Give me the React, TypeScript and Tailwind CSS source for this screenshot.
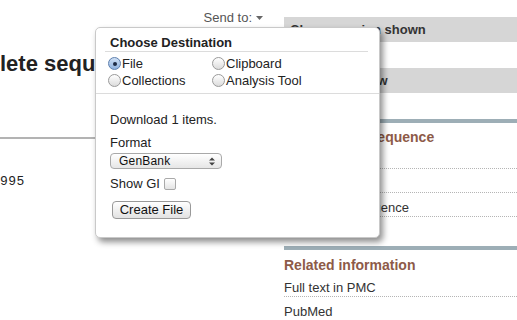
import React from 'react'

const analyzeItems = ['Run BLAST', 'Pick Primers', 'Find in this Sequence']
const relatedItems = ['Full text in PMC', 'PubMed']

function Radio({ checked }: { checked?: boolean }) {
  return (
    <span
      className={
        checked
          ? 'w-[13px] h-[13px] rounded-full border border-[#5d7fae] bg-gradient-to-b from-[#cfe0f5] to-[#8fb2df] flex items-center justify-center shrink-0'
          : 'w-[13px] h-[13px] rounded-full border border-[#9a9a9a] bg-gradient-to-b from-white to-[#dcdcdc] shrink-0'
      }
    >
      {checked && <span className="w-[4px] h-[4px] rounded-full bg-[#1d2a44]" />}
    </span>
  )
}

function SendToPopup() {
  return (
    <div className="absolute left-[95px] top-[27px] w-[285px] h-[211px] bg-white border border-[#c9c9c9] rounded-[5px] shadow-[3px_4px_6px_rgba(0,0,0,0.45)] text-[13px] text-[#222]">
      {/* header */}
      <div className="ml-[9px] mr-[11px] pt-[7px] pl-[5px] leading-[16px] font-bold border-b border-[#dcdcdc]">
        Choose Destination
      </div>

      {/* destinations */}
      <div className="grid grid-cols-[104px_1fr] pl-[12px] pt-[3px] pb-[4px] border-b border-[#dcdcdc] leading-[17px]">
        <label className="flex items-center gap-[1px]">
          <Radio checked />
          File
        </label>
        <label className="flex items-center gap-[1px]">
          <Radio />
          Clipboard
        </label>
        <label className="flex items-center gap-[1px]">
          <Radio />
          Collections
        </label>
        <label className="flex items-center gap-[1px]">
          <Radio />
          Analysis Tool
        </label>
      </div>

      {/* file options */}
      <div className="pl-[14px] pt-[18px] leading-[16px]">
        <div>Download 1 items.</div>
        <div className="mt-[7px]">Format</div>
        <div className="mt-[2px] w-[112px] h-[16px] rounded-[4px] border border-[#a9a9a9] bg-gradient-to-b from-white to-[#e6e6e6] flex items-center justify-between pl-[8px] pr-[6px] text-[12px] leading-[14px] text-[#111]">
          <span className="tracking-[0.2px]">GenBank</span>
          <svg width="6" height="9" viewBox="0 0 6 9">
            <path d="M0 3.5 L3 0.5 L6 3.5 Z M0 5.5 L3 8.5 L6 5.5 Z" fill="#444" />
          </svg>
        </div>
        <div className="mt-[7px] flex items-center">
          Show GI
          <span className="ml-[4px] w-[12px] h-[12px] rounded-[2px] border border-[#a9a9a9] bg-gradient-to-b from-white to-[#e4e4e4]" />
        </div>
        <button className="mt-[9px] ml-[2px] w-[79px] h-[18px] rounded-[4px] border border-[#999] bg-gradient-to-b from-white to-[#e2e2e2] text-[13px] leading-[16px] text-[#111]">
          Create File
        </button>
      </div>
    </div>
  )
}

export default function App() {
  return (
    <div className="relative w-[517px] h-[320px] overflow-hidden bg-white font-['Liberation_Sans',Arial,sans-serif] text-[#333]">
      <div className="flex">
        {/* main column */}
        <div className="w-[284px] shrink-0 overflow-hidden">
          <div className="pt-[10px] pr-[21px] flex justify-end items-center gap-[4px] text-[13px] leading-[16px] text-[#555]">
            Send to:
            <svg width="7" height="4" viewBox="0 0 7 4">
              <path d="M0 0 L7 0 L3.5 4 Z" fill="#666" />
            </svg>
          </div>
          <h1 className="mt-[26px] whitespace-nowrap text-[22px] leading-[24px] font-bold text-[#222]">
            lete sequence
          </h1>
          <div className="mt-[61px] h-[2px] bg-[#b3b3b3]" />
          <div className="mt-[35px] font-['Liberation_Mono',monospace] text-[13px] leading-[16px] tracking-[0.5px] text-[#222]">
            995
          </div>
        </div>

        {/* right column */}
        <div className="flex-1 text-[13px]">
          <div className="mt-[17px] h-[25px] bg-[#d6d6d6] pl-[6px] leading-[25px] font-bold text-[#333]">
            Change region shown
          </div>
          <div className="mt-[26px] h-[25px] bg-[#d6d6d6] pl-[6px] leading-[25px] font-bold text-[#333]">
            Customize view
          </div>

          <div className="mt-[26px] h-[4px] bg-[#9daeb6]" />
          <div className="pt-[6px] leading-[16px] text-[14px] font-bold text-[#8d5a48]">Analyze this sequence</div>
          <ul>
            {analyzeItems.map((item) => (
              <li key={item} className="h-[24px] pt-[6px] leading-[17px] border-b border-dotted border-[#b5b5b5] text-[#333]">
                {item}
              </li>
            ))}
          </ul>

          <div className="mt-[29px] h-[4px] bg-[#9daeb6]" />
          <div className="pt-[7px] leading-[16px] text-[14px] font-bold text-[#8d5a48]">Related information</div>
          <ul>
            {relatedItems.map((item) => (
              <li key={item} className="h-[24px] pt-[6px] leading-[17px] border-b border-dotted border-[#b5b5b5] text-[#333]">
                {item}
              </li>
            ))}
          </ul>
        </div>
      </div>

      <SendToPopup />
    </div>
  )
}
